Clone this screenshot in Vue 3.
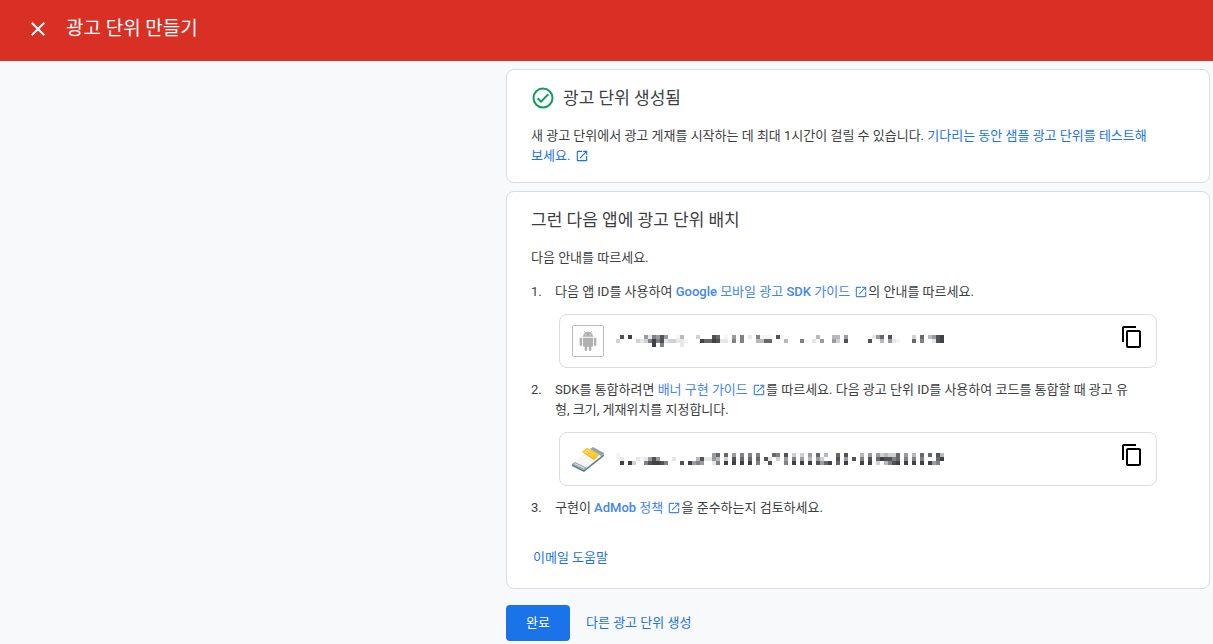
<script setup>
const shades = ['', '#f5f5f6', '#e6e7e8', '#d0d1d2', '#b8b9bb', '#9a9b9e', '#808184', '#66686c', '#505257', '#3f4146']

// Each entry is one row of 4px blocks: column -> darkness.
const appId = [
  { 1: 8, 3: 9, 7: 5, 8: 2, 9: 6, 10: 5, 11: 8, 12: 5, 15: 1, 16: 4, 20: 3, 24: 8, 25: 7, 27: 1, 29: 5, 31: 6, 33: 2, 35: 6, 36: 1, 37: 1, 38: 1, 40: 8, 41: 1, 50: 4, 54: 4, 55: 4, 57: 5, 64: 2, 65: 5, 66: 7, 68: 8, 69: 1, 74: 3, 76: 7, 78: 4, 79: 5, 80: 8, 81: 9 },
  { 0: 3, 5: 3, 6: 2, 7: 3, 8: 6, 9: 9, 10: 6, 11: 8, 12: 2, 13: 3, 14: 3, 15: 2, 16: 2, 17: 1, 21: 9, 22: 7, 23: 7, 24: 9, 25: 8, 26: 2, 27: 2, 29: 6, 31: 6, 35: 4, 36: 4, 37: 7, 38: 7, 42: 4, 46: 6, 49: 2, 51: 5, 54: 5, 55: 3, 57: 8, 63: 8, 66: 4, 68: 5, 69: 2, 70: 1, 74: 7, 76: 6, 79: 2, 80: 8, 81: 9 },
  { 9: 9, 11: 6, 16: 2 },
]

const unitId = [
  { 0: 1, 24: 5, 25: 7, 27: 7, 29: 5, 31: 6, 33: 6, 35: 6, 39: 7, 40: 6, 42: 8, 44: 3, 46: 3, 48: 5, 50: 7, 52: 4, 55: 7, 57: 8, 61: 4, 63: 5, 65: 5, 66: 3, 67: 4, 68: 3, 69: 3, 70: 7, 72: 5, 74: 4, 76: 7, 78: 7, 80: 8, 81: 4 },
  { 0: 1, 1: 2, 5: 2, 6: 1, 7: 2, 8: 5, 9: 8, 10: 5, 14: 2, 20: 4, 21: 8, 22: 2, 23: 2, 24: 5, 25: 4, 27: 3, 29: 8, 31: 7, 33: 7, 35: 7, 37: 8, 38: 2, 40: 3, 42: 5, 44: 6, 46: 5, 48: 4, 50: 5, 51: 3, 55: 8, 57: 5, 59: 8, 61: 6, 63: 8, 65: 7, 66: 9, 67: 8, 68: 8, 69: 6, 70: 7, 72: 6, 74: 6, 76: 6, 80: 7, 81: 9 },
  { 1: 9, 3: 9, 4: 3, 7: 6, 8: 8, 9: 9, 10: 9, 11: 8, 12: 6, 16: 8, 18: 9, 19: 5, 20: 6, 21: 5, 24: 2, 25: 6, 27: 9, 29: 9, 31: 9, 33: 9, 35: 6, 38: 8, 42: 6, 44: 9, 46: 9, 48: 9, 50: 8, 51: 5, 52: 7, 53: 9, 55: 7, 57: 9, 61: 9, 63: 9, 65: 3, 67: 4, 68: 6, 69: 8, 70: 9, 72: 9, 74: 9, 76: 9, 78: 9, 79: 5, 80: 6 },
]

function blocks(rows) {
  return rows.flatMap((row, y) =>
    Object.entries(row).map(([x, d]) => ({ x: Number(x) * 4, y: y * 4, fill: shades[d] })),
  )
}

const appBlocks = blocks(appId)
const unitBlocks = blocks(unitId)
const openPath =
  'M19 19H5V5h7V3H5a2 2 0 0 0-2 2v14a2 2 0 0 0 2 2h14c1.1 0 2-.9 2-2v-7h-2v7zM14 3v2h3.59l-9.83 9.83 1.41 1.41L19 6.41V10h2V3h-7z'
const copyPath =
  'M16 1H4c-1.1 0-2 .9-2 2v14h2V3h12V1zm3 4H8c-1.1 0-2 .9-2 2v14c0 1.1.9 2 2 2h11c1.1 0 2-.9 2-2V7c0-1.1-.9-2-2-2zm0 16H8V7h11v14z'
</script>

<template>
  <div class="page">
    <header class="bar">
      <button class="close" type="button" aria-label="닫기">
        <svg viewBox="0 0 24 24" width="24" height="24"><path fill="#fff" d="M19 6.41 17.59 5 12 10.59 6.41 5 5 6.41 10.59 12 5 17.59 6.41 19 12 13.41 17.59 19 19 17.59 13.41 12z" /></svg>
      </button>
      <h1>광고 단위 만들기</h1>
    </header>

    <main>
      <section class="card created">
        <h2>
          <svg viewBox="0 0 24 24" width="24" height="24"><path fill="#0f9d58" d="M12 1.500a10.500 10.500 0 1 0 0 21 10.500 10.500 0 0 0 0-21zm0 19a8.500 8.500 0 1 1 0-17 8.500 8.500 0 0 1 0 17zM16.600 7.600 10 14.200l-2.600-2.600L6 13l4 4 8-8z" /></svg>
          광고 단위 생성됨
        </h2>
        <p>새 광고 단위에서 광고 게재를 시작하는 데 최대 1시간이 걸릴 수 있습니다. <a class="sample" href="#test">기다리는 동안 샘플 광고 단위를 테스트해보세요. <svg class="open" viewBox="0 0 24 24"><path fill="currentColor" :d="openPath" /></svg></a></p>
      </section>

      <section class="card place">
        <h2>그런 다음 앱에 광고 단위 배치</h2>
        <p>다음 안내를 따르세요.</p>
        <ol>
          <li>
            <div class="step">다음 앱 ID를 사용하여 <a href="#sdk"><b>Google</b> 모바일 광고 <b>SDK</b> 가이드 <svg class="open" viewBox="0 0 24 24"><path fill="currentColor" :d="openPath" /></svg></a>의 안내를 따르세요.</div>
            <div class="box">
              <span class="app">
                <svg viewBox="0 0 24 24" width="24" height="24"><path fill="#b0b0b0" d="M6 18c0 .55.45 1 1 1h1v3.500c0 .83.67 1.500 1.500 1.500s1.500-.67 1.500-1.500V19h2v3.500c0 .83.67 1.500 1.500 1.500s1.500-.67 1.500-1.500V19h1c.55 0 1-.45 1-1V8H6v10zM3.500 8C2.670 8 2 8.670 2 9.500v7c0 .83.67 1.500 1.500 1.500S5 17.330 5 16.500v-7C5 8.670 4.330 8 3.500 8zm17 0c-.83 0-1.500.67-1.500 1.500v7c0 .83.67 1.500 1.500 1.500s1.500-.67 1.500-1.500v-7c0-.83-.67-1.500-1.500-1.500zm-4.970-5.840 1.300-1.300c.2-.2.2-.51 0-.71-.2-.2-.51-.2-.71 0l-1.480 1.480A5.840 5.840 0 0 0 12 1c-.96 0-1.860.23-2.660.63L7.850.15c-.2-.2-.51-.2-.71 0-.2.2-.2.51 0 .71l1.310 1.310A5.980 5.980 0 0 0 6 7h12c0-1.990-.97-3.750-2.470-4.840zM10 5H9V4h1v1zm5 0h-1V4h1v1z" /></svg>
              </span>
              <svg class="code" viewBox="0 0 328 12" width="328" height="12" shape-rendering="crispEdges">
                <rect v-for="b in appBlocks" :key="`${b.x}-${b.y}`" :x="b.x" :y="b.y" width="4" height="4" :fill="b.fill" />
              </svg>
              <button class="copy" type="button" aria-label="앱 ID 복사">
                <svg viewBox="0 0 24 24" width="24" height="24"><path :d="copyPath" /></svg>
              </button>
            </div>
          </li>
          <li>
            <div class="step">SDK를 통합하려면 <a href="#banner">배너 구현 가이드 <svg class="open" viewBox="0 0 24 24"><path fill="currentColor" :d="openPath" /></svg></a>를 따르세요. 다음 광고 단위 ID를 사용하여 코드를 통합할 때 광고 유형, 크기, 게재위치를 지정합니다.</div>
            <div class="box">
              <svg class="banner" viewBox="0 0 32 32" width="32" height="32">
                <path fill="#607d8b" d="M0 21v2l12 6 20-16v-2z" />
                <path fill="#f5f6f7" d="M0 21 20 5l12 6-20 16z" />
                <path fill="#90a4ae" d="m0 21 3-2 12 6-3 2zM18 6l3-2 11 6v1l-3 2z" />
                <path fill="#cfd8dc" d="m2 21 1-1 10 5-1 1z" />
                <path fill="#ffb300" d="m10 9 5-4 12 7-5 5z" />
                <path fill="#ffc928" d="m10 9 5-4 12 6-5 4z" />
                <path fill="none" stroke="#ffe082" stroke-width="1" d="m13 9 2-2 2 1-2 2zM18 9l4 2M17 11l4 2" />
              </svg>
              <svg class="code" viewBox="0 0 328 12" width="328" height="12" shape-rendering="crispEdges">
                <rect v-for="b in unitBlocks" :key="`${b.x}-${b.y}`" :x="b.x" :y="b.y" width="4" height="4" :fill="b.fill" />
              </svg>
              <button class="copy" type="button" aria-label="광고 단위 ID 복사">
                <svg viewBox="0 0 24 24" width="24" height="24"><path :d="copyPath" /></svg>
              </button>
            </div>
          </li>
          <li>
            <div class="step">구현이 <a href="#policy"><b>AdMob</b> 정책 <svg class="open" viewBox="0 0 24 24"><path fill="currentColor" :d="openPath" /></svg></a>을 준수하는지 검토하세요.</div>
          </li>
        </ol>
        <button class="text mail" type="button">이메일 도움말</button>
      </section>

      <div class="actions">
        <button class="done" type="button">완료</button>
        <button class="text" type="button">다른 광고 단위 생성</button>
      </div>
    </main>
  </div>
</template>

<style>
body {
  margin: 0;
  background: #f8f9fb;
}
</style>

<style scoped>
.page {
  font: 13px/20px Roboto, "Noto Sans CJK KR", sans-serif;
  color: #3c4043;
}
svg {
  flex: none;
}
button {
  font: inherit;
  border: 0;
  padding: 0;
  background: none;
  cursor: pointer;
}
.bar {
  display: flex;
  align-items: center;
  gap: 16px;
  box-sizing: border-box;
  height: 61px;
  padding: 0 26px 4px;
  background: #d93025;
  color: #fff;
}
.close {
  display: flex;
}
h1 {
  margin: 0;
  font-size: 19px;
  line-height: 28px;
  font-weight: 400;
}
main {
  padding: 8px 3px 3px 506px;
}
.card {
  background: #fff;
  border: 1px solid #dadce0;
  border-radius: 8px;
  padding: 16px 24px;
  margin-bottom: 8px;
}
h2 {
  display: flex;
  align-items: center;
  gap: 8px;
  margin: 0 0 16px;
  font-size: 17px;
  line-height: 24px;
  font-weight: 400;
}
.created p {
  padding-right: 32px;
}
p {
  margin: 0;
}
a {
  color: #4285f4;
  text-decoration: none;
}
b {
  font-weight: 500;
}
a.sample {
  color: #1a73e8;
}
.open {
  width: 14px;
  height: 14px;
  margin-left: 1px;
  vertical-align: -3px;
}
ol {
  margin: 14px 24px 0 0;
  padding: 0;
  list-style: none;
  counter-reset: step;
}
li {
  counter-increment: step;
  display: grid;
  grid-template-columns: 24px 1fr;
  row-gap: 12px;
  margin-bottom: 12px;
}
li::before {
  content: counter(step) ".";
}
.step {
  padding-right: 24px;
}
.box {
  grid-column: 2;
  display: flex;
  align-items: center;
  box-sizing: border-box;
  height: 54px;
  margin: 0 4px;
  padding: 0 12px;
  border: 1px solid #dadce0;
  border-radius: 8px;
}
.app {
  display: flex;
  align-items: center;
  justify-content: center;
  box-sizing: border-box;
  width: 32px;
  height: 32px;
  border: 1px solid #bdbdbd;
  border-radius: 2px;
}
.app svg {
  width: 20px;
  height: 20px;
}
.code {
  margin-left: 12px;
}
.copy {
  display: flex;
  margin: 0 0 8px auto;
}
.text {
  color: #1a73e8;
}
.mail {
  display: block;
  margin: 30px 2px 4px;
}
.actions {
  display: flex;
  align-items: center;
  gap: 16px;
  margin-top: 16px;
}
.done {
  min-width: 64px;
  height: 36px;
  border-radius: 4px;
  background: #1a73e8;
  color: #fff;
}
</style>
